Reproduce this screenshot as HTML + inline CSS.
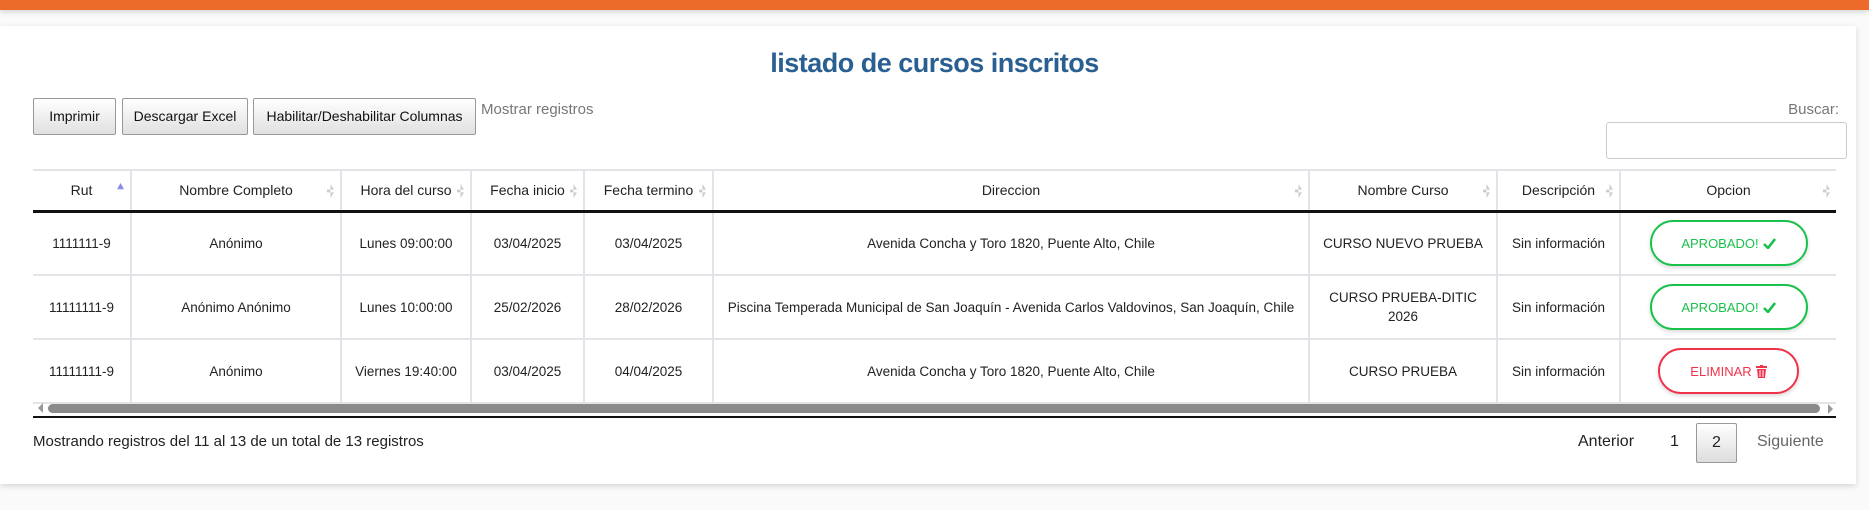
<!DOCTYPE html>
<html><head><meta charset="utf-8"><style>
*{box-sizing:border-box;margin:0;padding:0}
body{width:1869px;height:510px;background:#fafafa;font-family:"Liberation Sans",sans-serif;color:#222;position:relative;overflow:hidden}
.bar{position:absolute;left:0;top:0;width:1869px;height:10px;background:#ec6a2a;box-shadow:0 2px 6px rgba(0,0,0,.15)}
.card{position:absolute;left:0;top:26px;width:1856px;height:458px;background:#fff;box-shadow:0 2px 6px rgba(0,0,0,.15)}
.a{position:absolute}
h1{position:absolute;top:48px;left:0;width:1869px;text-align:center;font-size:27px;color:#2a5f91;font-weight:bold;letter-spacing:-0.5px}
.btn{position:absolute;top:98px;height:37px;border:1px solid #999;border-radius:2px;background:linear-gradient(#fff,#e0e0e0);font-size:14px;line-height:35px;text-align:center;color:#111}
table{position:absolute;left:33px;top:169px;width:1803px;border-collapse:collapse;font-size:13.5px}
th{height:41px;font-weight:normal;border:2px solid #e3e4e8;border-bottom:3px solid #111;border-top:2px solid #e3e4e8;position:relative;font-size:14px}
th:after{content:"";position:absolute;right:6px;top:13px;width:7px;height:14px;background:#ccc;clip-path:polygon(50% 0,100% 40%,0 40%,0 60%,100% 60%,50% 100%)}
th.s:after{background:#8a8ee0;clip-path:polygon(50% 0,100% 45%,0 45%);top:12px}
td{border:2px solid #e3e4e8;text-align:center;height:64px;line-height:19px}
tr td:first-child,tr th:first-child{border-left:none}
tr td:last-child,tr th:last-child{border-right:none}
.pill{display:inline-flex;align-items:center;justify-content:center;gap:4px;width:158px;height:46px;border:2px solid #19c24a;border-radius:23px;color:#19c24a;font-size:13px;box-shadow:0 2px 4px rgba(0,0,0,.15)}
.pill.r{width:141px;border-color:#f0324b;color:#f0324b}
</style></head><body>
<div class="bar"></div>
<div class="card"></div>
<h1>listado de cursos inscritos</h1>
<div class="btn" style="left:33px;width:83px">Imprimir</div>
<div class="btn" style="left:122px;width:126px">Descargar Excel</div>
<div class="btn" style="left:253px;width:223px">Habilitar/Deshabilitar Columnas</div>
<div class="a" style="left:481px;top:101px;font-size:15px;color:#777">Mostrar registros</div>
<div class="a" style="left:1700px;width:139px;text-align:right;top:101px;font-size:15px;color:#777">Buscar:</div>
<div class="a" style="left:1606px;top:122px;width:241px;height:37px;border:1px solid #ccc;border-radius:3px"></div>
<table>
<tr><th class="s" style="width:98px">Rut</th><th style="width:210px">Nombre Completo</th><th style="width:130px">Hora del curso</th><th style="width:113px">Fecha inicio</th><th style="width:129px">Fecha termino</th><th style="width:596px">Direccion</th><th style="width:188px">Nombre Curso</th><th style="width:123px">Descripción</th><th>Opcion</th></tr>
<tr><td>1111111-9</td><td>Anónimo</td><td>Lunes 09:00:00</td><td>03/04/2025</td><td>03/04/2025</td><td>Avenida Concha y Toro 1820, Puente Alto, Chile</td><td>CURSO NUEVO PRUEBA</td><td>Sin información</td><td><span class="pill">APROBADO!<svg width="13" height="11" viewBox="0 0 13 11"><path d="M1 6l4 4 7-9" fill="none" stroke="#19c24a" stroke-width="2.6"/></svg></span></td></tr>
<tr><td>11111111-9</td><td>Anónimo Anónimo</td><td>Lunes 10:00:00</td><td>25/02/2026</td><td>28/02/2026</td><td>Piscina Temperada Municipal de San Joaquín - Avenida Carlos Valdovinos, San Joaquín, Chile</td><td>CURSO PRUEBA-DITIC<br>2026</td><td>Sin información</td><td><span class="pill">APROBADO!<svg width="13" height="11" viewBox="0 0 13 11"><path d="M1 6l4 4 7-9" fill="none" stroke="#19c24a" stroke-width="2.6"/></svg></span></td></tr>
<tr><td>11111111-9</td><td>Anónimo</td><td>Viernes 19:40:00</td><td>03/04/2025</td><td>04/04/2025</td><td>Avenida Concha y Toro 1820, Puente Alto, Chile</td><td>CURSO PRUEBA</td><td>Sin información</td><td><span class="pill r">ELIMINAR<svg width="11" height="13" viewBox="0 0 11 13"><rect x="0" y="1" width="11" height="2" fill="#f0324b"/><rect x="4" y="0" width="3" height="2" fill="#f0324b"/><path d="M1 4h9l-1 9H2z" fill="#f0324b"/><path d="M4 5v7M7 5v7" stroke="#fff" stroke-width="1"/></svg></span></td></tr>
</table>
<div class="a" style="left:38px;top:403px;width:0;height:0;border:5px solid transparent;border-right-color:#999;border-left:none"></div>
<div class="a" style="left:48px;top:404px;width:1772px;height:9px;background:#8a8a8a;border-radius:5px"></div>
<div class="a" style="left:1828px;top:404px;width:0;height:0;border:5px solid transparent;border-left-color:#999;border-right:none"></div>
<div class="a" style="left:33px;top:416px;width:1803px;height:2px;background:#111"></div>
<div class="a" style="left:33px;top:433px;font-size:15px">Mostrando registros del 11 al 13 de un total de 13 registros</div>
<div class="a" style="left:1578px;top:433px;font-size:16px">Anterior</div>
<div class="a" style="left:1670px;top:433px;font-size:16px">1</div>
<div class="a" style="left:1696px;top:423px;width:41px;height:40px;border:1px solid #999;border-radius:2px;background:linear-gradient(#fff,#ddd);text-align:center;line-height:38px;font-size:16px">2</div>
<div class="a" style="left:1757px;top:433px;font-size:16px;color:#666">Siguiente</div>
</body></html>
